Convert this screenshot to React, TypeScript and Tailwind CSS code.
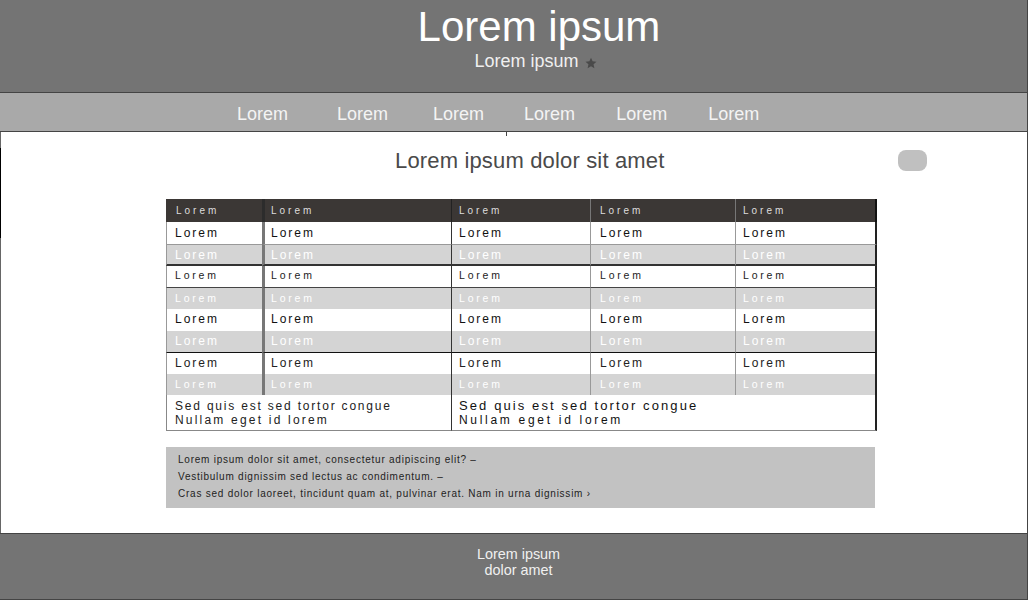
import React from 'react';

const navItems = [
  { label: 'Lorem', cls: 'ml-0' },
  { label: 'Lorem', cls: 'ml-[49px]' },
  { label: 'Lorem', cls: 'ml-[45px]' },
  { label: 'Lorem', cls: 'ml-[40px]' },
  { label: 'Lorem', cls: 'ml-[41px]' },
  { label: 'Lorem', cls: 'ml-[41px]' },
];

const big = 'text-[12px] tracking-[2px]';
const small = 'text-[10.5px] tracking-[2.8px]';

const rows = [
  { h: 'h-[23px]', bg: 'bg-white', text: `text-[#111] ${big}`, line: 'border-b border-b-[#999]' },
  { h: 'h-[21px]', bg: 'bg-[#d4d4d4]', text: `text-white ${big}`, line: 'border-b-2 border-b-[#333]' },
  { h: 'h-[22px]', bg: 'bg-white', text: `text-[#222] pb-[2px] ${small}`, line: 'border-b border-b-[#444]' },
  { h: 'h-[21px]', bg: 'bg-[#d4d4d4]', text: `text-white ${small}`, line: '' },
  { h: 'h-[22px]', bg: 'bg-white', text: `text-[#111] pb-[3px] ${big}`, line: '' },
  { h: 'h-[22px]', bg: 'bg-[#d4d4d4]', text: `text-white pb-[2px] ${big}`, line: 'border-b border-b-[#111]' },
  { h: 'h-[21px]', bg: 'bg-white', text: `text-[#222] pb-[2px] ${big}`, line: '' },
  { h: 'h-[21px]', bg: 'bg-[#d4d4d4]', text: `text-white ${small}`, line: '' },
];

const colCls = [
  'w-[96px] border-l border-l-[#999]',
  'w-[189px] border-l-[3px] border-l-[#777]',
  'w-[139px] border-l border-l-[#333]',
  'w-[145px] border-l border-l-[#999]',
  'w-[142px] border-l border-l-[#999] border-r-2 border-r-[#222]',
];

const headCls = [
  'w-[96px] pl-[10px]',
  'w-[189px] pl-[6px] border-l-[3px] border-l-[#2c2c2c]',
  'w-[139px] pl-[7px] border-l border-l-[#222]',
  'w-[145px] pl-[9px] border-l border-l-[#777]',
  'w-[142px] pl-[7px] border-l border-l-[#777] border-r-2 border-r-[#111]',
];

const padCls = ['pl-[8px]', 'pl-[6px]', 'pl-[7px]', 'pl-[9px]', 'pl-[7px]'];

const notes = [
  'Lorem ipsum dolor sit amet, consectetur adipiscing elit? –',
  'Vestibulum dignissim sed lectus ac condimentum. –',
  'Cras sed dolor laoreet, tincidunt quam at, pulvinar erat. Nam in urna dignissim ›',
];

export default function App() {
  return (
    <div className="w-[1028px] h-[600px] overflow-hidden flex flex-col border-r border-[#444] font-['Liberation_Sans',Arial,sans-serif]">
      {/* Header */}
      <header className="h-[93px] shrink-0 bg-[#747474] border-b border-[#444] pl-[51px] text-center text-white">
        <h1 className="text-[42px] leading-[48px] pt-[3px] h-[51px] font-normal">Lorem ipsum</h1>
        <p className="text-[18px] leading-[20px] text-[#f0f0f0] pr-[7px]">
          Lorem ipsum
          <svg viewBox="0 0 24 24" className="inline-block w-[12px] h-[12px] ml-[6px] -mb-[2px] fill-[#4a4a4a]">
            <path d="M12 1.5l3.2 7.2 7.8.8-5.9 5.2 1.7 7.8-6.8-4-6.8 4 1.7-7.8L1 9.500l7.800-.8z" />
          </svg>
        </p>
      </header>

      {/* Nav */}
      <nav className="h-[39px] shrink-0 bg-[#a9a9a9] border-b border-[#444] pl-[237px] pt-[5px] flex items-center text-[18px] text-[#f4f4f4]">
        {navItems.map((item, i) => (
          <span key={i} className={item.cls}>{item.label}</span>
        ))}
      </nav>

      {/* Content */}
      <main className="relative flex-1 bg-white border-l border-[#666] pl-[165px]">
        <span className="absolute left-[505px] -top-[1px] w-px h-[5px] bg-[#444]" />
        <span className="absolute -left-px top-[16px] w-px h-[90px] bg-black" />

        <div className="h-[67px] pt-[16px] flex">
          <h2 className="ml-[229px] text-[22px] leading-[26px] tracking-[0.16px] font-normal text-[#4a4a4a]">Lorem ipsum dolor sit amet</h2>
          <button className="ml-[234px] mt-[2px] w-[29px] h-[21px] rounded-lg bg-[#c0c0c0]" />
        </div>

        <table className="table-fixed border-separate border-spacing-0 w-[711px]">
          <thead>
            <tr className="h-[23px] bg-[#3b3735]">
              {headCls.map((c, i) => (
                <th key={i} className={`p-0 ${c} text-left font-normal text-[10px] tracking-[3px] text-[#ddd]`}>
                  Lorem
                </th>
              ))}
            </tr>
          </thead>
          <tbody>
            {rows.map((r, ri) => (
              <tr key={ri} className={`${r.h} ${r.bg}`}>
                {colCls.map((c, i) => (
                  <td key={i} className={`p-0 ${c} ${padCls[i]} ${r.text} ${r.line}`}>
                    Lorem
                  </td>
                ))}
              </tr>
            ))}
            <tr className="h-[36px] bg-white">
              <td colSpan={2} className="p-0 pl-[8px] border-l border-b border-l-[#888] border-b-[#888] text-[#222]">
                <div className="text-[12px] leading-[14px] tracking-[1.8px]">Sed quis est sed tortor congue</div>
                <div className="text-[12px] leading-[14px] tracking-[2.2px]">Nullam eget id lorem</div>
              </td>
              <td colSpan={3} className="p-0 pl-[7px] border-l border-l-[#333] border-b border-b-[#888] border-r-2 border-r-[#222] text-[#111]">
                <div className="text-[13px] leading-[15px] tracking-[2.1px]">Sed quis est sed tortor congue</div>
                <div className="text-[12px] leading-[14px] tracking-[2.7px]">Nullam eget id lorem</div>
              </td>
            </tr>
          </tbody>
        </table>

        <div className="mt-[16px] w-[709px] h-[61px] bg-[#c2c2c2] pl-[12px] pt-[4px] text-[10px] leading-[17px] tracking-[0.76px] text-[#222]">
          {notes.map((n, i) => (
            <p key={i}>{n}</p>
          ))}
        </div>
      </main>

      {/* Footer */}
      <footer className="h-[67px] shrink-0 bg-[#747474] border-y border-[#444] pl-[10px] pt-[12px] text-center text-[14.4px] leading-[16px] text-[#f0f0f0]">
        Lorem ipsum
        <br />
        dolor amet
      </footer>
    </div>
  );
}
